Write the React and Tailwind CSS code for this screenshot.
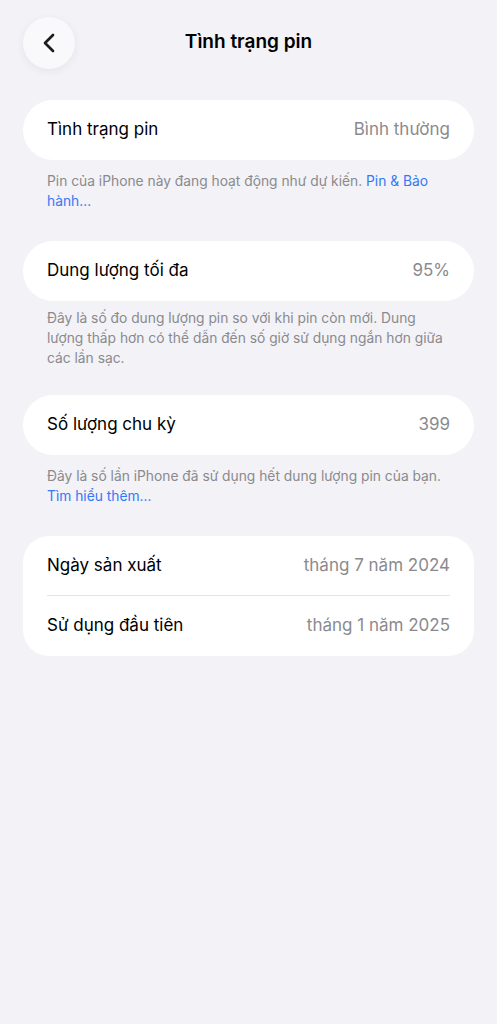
import { ChevronLeft } from 'lucide-react';

function Row({ label, value, divider }) {
    return (
        <div className="flex items-center justify-between h-[60px] relative">
            <span className="text-[17px] text-black">{label}</span>
            <span className="text-[17px] text-[#8a8a8e]">{value}</span>
            {divider && <div className="absolute left-0 right-0 bottom-0 h-px bg-[#e3e3e8]" />}
        </div>
    );
}

function Note({ children, className = 'pt-[11px]' }) {
    return (
        <p className={`px-6 text-[13.8px] leading-[20px] text-[#8a8a8e] ${className}`}>
            {children}
        </p>
    );
}

export default function App() {
    return (
        <div
            className="min-h-[1024px] bg-[#f2f2f7] px-[23px]"
            style={{ fontFamily: 'Inter, "Noto Sans", sans-serif' }}
        >
            {/* Header */}
            <div className="relative flex items-center justify-center h-[85px]">
                <button className="absolute left-0 top-[17px] w-[52px] h-[52px] rounded-full bg-[#f9f9fb] shadow-[0_2px_10px_rgba(0,0,0,0.06)] flex items-center justify-center">
                    <ChevronLeft className="w-[32px] h-[32px] text-[#1c1c1e]" strokeWidth={2} />
                </button>
                <h1 className="text-[19px] font-semibold text-black">Tình trạng pin</h1>
            </div>

            <div className="pt-[15px]">
                <div className="bg-white rounded-[30px] px-6">
                    <Row label="Tình trạng pin" value="Bình thường" />
                </div>
                <Note>
                    Pin của iPhone này đang hoạt động như dự kiến.{' '}
                    <span className="text-[#3478f6]">Pin &amp; Bảo hành...</span>
                </Note>

                <div className="bg-white rounded-[30px] px-6 mt-[30px]">
                    <Row label="Dung lượng tối đa" value="95%" />
                </div>
                <Note className="pt-[7px] leading-[19.5px]">
                    Đây là số đo dung lượng pin so với khi pin còn mới. Dung lượng thấp hơn có thể dẫn đến số giờ sử dụng ngắn hơn giữa các lần sạc.
                </Note>

                <div className="bg-white rounded-[30px] px-6 mt-[27px]">
                    <Row label="Số lượng chu kỳ" value="399" />
                </div>
                <Note>
                    Đây là số lần iPhone đã sử dụng hết dung lượng pin của bạn.{' '}
                    <span className="text-[#3478f6]">Tìm hiểu thêm...</span>
                </Note>

                <div className="bg-white rounded-[26px] px-6 mt-[30px]">
                    <Row label="Ngày sản xuất" value="tháng 7 năm 2024" divider />
                    <Row label="Sử dụng đầu tiên" value="tháng 1 năm 2025" />
                </div>
            </div>
        </div>
    );
}
